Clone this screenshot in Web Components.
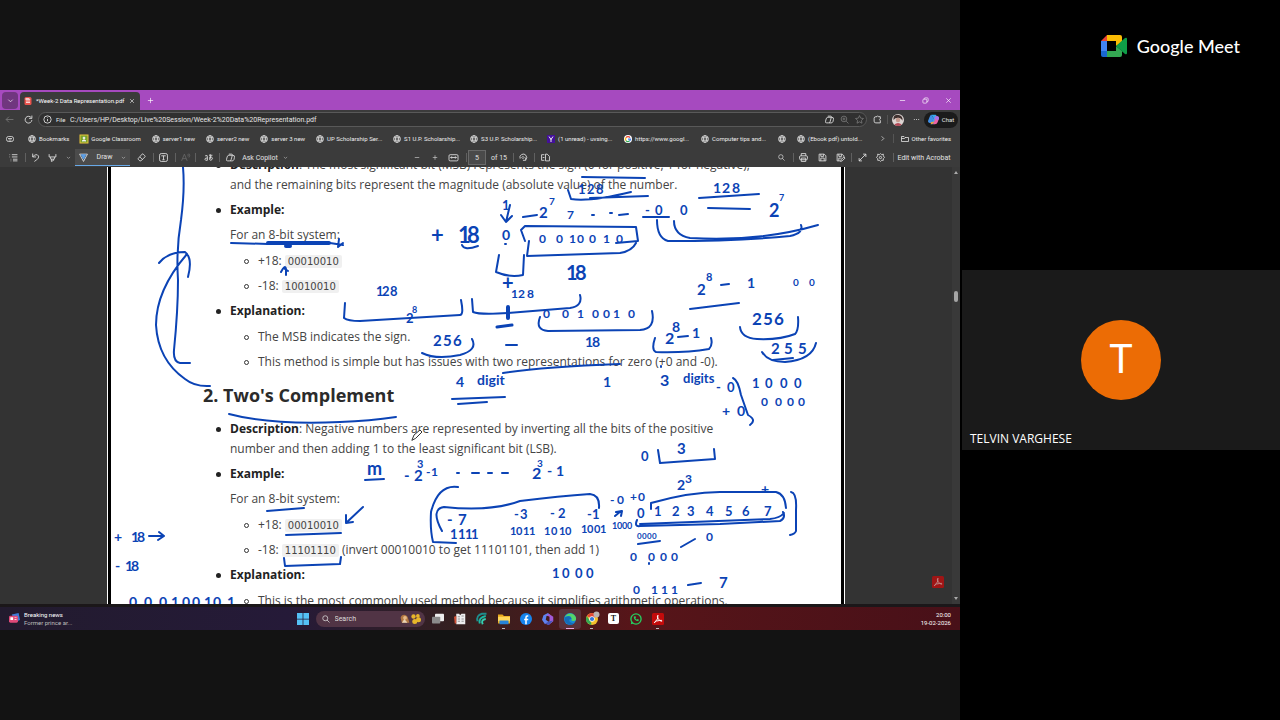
<!DOCTYPE html>
<html lang="en">
<head>
<meta charset="utf-8">
<title>Google Meet - Week-2 Data Representation</title>
<style>
html,body{margin:0;background:#000}
body{font-family:"Open Sans","Noto Sans",sans-serif;color:#fff}
</style>
</head>
<body>
<meet-room></meet-room>
<script>
const define=(name,css,html,setup)=>{
  const t=document.createElement('template');
  t.innerHTML=`<style>*{box-sizing:border-box}button,input,a{font:inherit;color:inherit;text-decoration:none;border:0;background:none;padding:0;margin:0}${css}</style>${html}`;
  customElements.define(name,class extends HTMLElement{
    constructor(){super();this.attachShadow({mode:'open'}).append(t.content.cloneNode(true));}
    connectedCallback(){if(setup)setup(this,this.shadowRoot);}
  });
};

/* Line icons share a 16-unit grid. */
const ICONS={
  down:'<path d="M3 6l5 5 5-5"/>',
  next:'<path d="M6 3l5 5-5 5"/>',
  close:'<path d="M3 3l10 10M13 3L3 13"/>',
  plus:'<path d="M8 2v12M2 8h12"/>',
  minus:'<path d="M2 8h12"/>',
  restore:'<rect x="2" y="5" width="9" height="9" rx="2"/><path d="M5 5V4q0-2 2-2h5q2 0 2 2v5q0 2-3 2"/>',
  back:'<path d="M15 8H2M7 3L2 8l5 5"/>',
  reload:'<path d="M13 5a6 6 0 1 0 1 4M14 1v5H9"/>',
  info:'<circle cx="8" cy="8" r="6.5"/><path d="M8 7v4M8 4v1"/>',
  globe:'<circle cx="8" cy="8" r="6.8"/><ellipse cx="8" cy="8" rx="3" ry="6.8"/><path d="M1.5 5.6h13M1.5 10.4h13"/>',
  side:'<rect x="1" y="3" width="14" height="10" rx="4"/><path d="M4 7h8M5 10h6"/>',
  folder:'<path d="M1 13V3h5l2 2h7v8zM1 7h6l2-2"/>',
  star:'<path d="M8 1l2.1 4.6 5 .6-3.7 3.4 1 5L8 12.1l-4.4 2.5 1-5L.9 6.2l5-.6z"/>',
  zoom:'<circle cx="7" cy="7" r="5"/><path d="M11 11l4 4M4.500 7h5M7 4.500v5"/>',
  search:'<circle cx="6.500" cy="6.500" r="5"/><path d="M10 10l5 5"/>',
  copilot:'<path d="M5 2h5q2 0 1 3l-2 7q-1 2-3 2H3q-3 0-2-3l1-4q1-3 3-3h7q4 0 3 4l-1 4q-1 2-3 2H7"/>',
  puzzle:'<path d="M5 3h2q1-3 3 0h3v4q-3 1 0 3v4H5q-3 0-3-3V6q0-3 3-3"/>',
  dots:'<path d="M2 8h2M7 8h2M12 8h2" stroke-width="2"/>',
  toc:'<path d="M5 3h10M5 7h10M7 11h8M1 3h1M1 7h1M3 11h1M3 14h1M7 14h8"/>',
  undo:'<path d="M3 1v6h6M3 7q3-5 8-4 4 2 2 6-2 3-7 6"/>',
  marker:'<path d="M2 2v5h12V2M4 7l1 4h6l1-4M6 11v4l4-2v-2"/>',
  draw:'<path d="M1 2l7 13 7-13z"/><path d="M4 3l4 8 4-8z" fill="#5ca0e8" stroke="#5ca0e8"/>',
  eraser:'<path d="M2 10l7-8q1-1 2 0l3 3q1 1 0 2l-7 7H5l-3-3zM5 7l5 5"/>',
  textbox:'<rect x="1" y="1" width="14" height="14" rx="3"/><path d="M4 5h8M8 5v7M6 12h4"/>',
  read:'<path d="M1 14L6 2l5 12M3 10h6M12 2q2 1 0 4M14 1q3 3 0 7"/>',
  translate:'<path d="M2 5q5-2 4 2v6H3q-3-2 0-4h3M9 4h6M11 2v9M10 8q4-2 5 1 0 3-3 4-3-1-2-3 1-3 3-5"/>',
  fit:'<rect x="0" y="3" width="16" height="11" rx="2"/><path d="M3 8h10M5 6L3 8l2 2M11 6l2 2-2 2"/>',
  rotate:'<path d="M2 10a6 6 0 1 1 10 2M12 8v5H7M7 6l2 2-2 2-2-2z"/>',
  pages:'<path d="M6 3H1v10h5M8 2v12h7V6l-4-4zM3 8h3"/>',
  print:'<rect x="1" y="5" width="14" height="7" rx="2"/><path d="M4 5V1h8v4M4 9h8v6H4z"/>',
  save:'<path d="M2 2h9l3 3v9H2zM5 2v4h5V2M5 14V9h6v5"/>',
  saveas:'<path d="M14 7V5l-3-3H2v12h5M5 2v4h5V2M5 14V9h5M8 15l1-3 5-5 2 2-5 5z"/>',
  expand:'<path d="M9 2h5v5M14 2L2 14M2 9v5h5"/>',
  gear:'<circle cx="8" cy="8" r="2"/><path d="M8 1l2 2 3-1 0 3 2 3-2 2v3l-3 0-2 2-2-2-3 0 0-3-2-2 2-3 0-3 3 1z"/>',
  classroom:'<rect width="16" height="16" fill="#78a22c" stroke="#e9c33b" stroke-width="2"/><circle cx="8" cy="6" r="2" fill="#fff"/><path d="M4 12q4-5 8 0z" fill="#fff"/>',
  yahoo:'<rect width="16" height="16" fill="#43109a" stroke="none"/><path d="M4 3l4 6 4-6M8 8v6" stroke-width="2"/>',
  google:'<circle cx="8" cy="8" r="8" fill="#fff" stroke="none"/><g stroke-width="2.500"><path d="M12 5a5 5 0 0 0-8 0" stroke="#e94435"/><path d="M4 5a5 5 0 0 0 0 6" stroke="#f9bd08"/><path d="M4 11a5 5 0 0 0 7 1" stroke="#34a853"/><path d="M11 12q2-2 2-4H8" stroke="#4285f4"/></g>',
  pdf:'<rect x="1" width="14" height="16" rx="3" fill="#e8524c" stroke="none"/><path d="M3 6V2h7l3 4" fill="#f3c9c6" stroke="none"/><path d="M4 11h8M4 8h8" stroke-width="1.500"/>',
  color:'<g stroke="none"><path d="M5 1h6q2 0 1 3L9 13q-1 2-3 2H4l4-9z" fill="#36a9ef"/><path d="M5 1q-2 0-3 4L0 10q0 3 4 3 3-1 4-7z" fill="#3f8fe8"/><path d="M11 3q5 0 5 3l-2 6q-1 3-4 3H6q2 0 3-4z" fill="#ed62a6"/><path d="M8 6l5-3q3 1 3 3l-1 3z" fill="#a673ed"/><path d="M4 12l5-1q-1 4-5 4z" fill="#f1a03e"/></g>',
  face:'<circle cx="8" cy="8" r="8" fill="#ddd5d3" stroke="none"/><path d="M2 8q-1-7 6-7 7 1 6 8-2-4-6-4T2 8" fill="#40312f" stroke="none"/><path d="M3 14q5-4 10 0-5 4-10 0" fill="#b34857" stroke="none"/><circle cx="8" cy="8" r="3" fill="#c59a8e" stroke="none"/>',
  windows:'<g fill="#54c1f6" stroke="none"><path d="M0 0h7.500v7.500H0zM8.500 0H16v7.500H8.500zM0 8.500h7.500V16H0zM8.500 8.500H16V16H8.500z"/></g>',
  news:'<g stroke="none"><path d="M4 2l10-2 2 10-7 3z" fill="#3d7bd8"/><rect x="0" y="4" width="13" height="10" rx="2" fill="#e04a78"/><path d="M2 6h4v4H2zM8 6h3v1H8zM8 9h3v1H8z" fill="#fff"/></g>',
  task:'<g stroke="none"><rect x="4" y="1" width="12" height="10" rx="1" fill="#eee"/><rect x="0" y="5" width="11" height="9" rx="1" fill="#8b8b8b"/></g>',
  paper:'<g stroke="none"><path d="M3 1h4l1 2 2-2h5v14H3z" fill="#eee"/><path d="M0 5l3-1v10H1z" fill="#d15237"/></g><path d="M5 5h3M10 4h3M5 8h3M10 8h3M5 11h3M10 11h3" stroke="#777" stroke-width="1"/>',
  swirl:'<g stroke-width="2.500"><path d="M2 11Q0 3 8 1h6" stroke="#1e8d8c"/><path d="M5 14Q3 6 13 4" stroke="#19b9a5"/><path d="M9 15Q6 9 13 8" stroke="#35d1b1"/></g>',
  files:'<g stroke="none"><path d="M0 2h6l2 2h8v10H0z" fill="#e9a91c"/><path d="M0 5h16v6H0z" fill="#ffd75a"/><path d="M2 10h12v5H2z" fill="#2684d8"/></g>',
  facebook:'<circle cx="8" cy="8" r="8" fill="#1684ed" stroke="none"/><path d="M11 4H9.500Q8 4 8 6v9M5.500 8.500H11" stroke-width="2"/>',
  office:'<g stroke="none"><path d="M8 0L2 3 0 9l4 6 5-3-4-3 1-5 5-1z" fill="#5e83ef"/><path d="M9 1l6 4v6l-6 5-5-2 6-3V5L6 3z" fill="#a25ad9"/><path d="M4 14l6-3 5-1-6 6z" fill="#4258b9"/></g>',
  edge:'<g stroke="none"><circle cx="8" cy="8" r="8" fill="#168bd7"/><path d="M1 6Q4-1 11 1q6 3 5 8-2 3-6 1 1-6-4-6-4 0-5 2" fill="#54d36a"/><path d="M1 6q8-4 9 2-5 0-2 4 4 3 7 0-5 7-11 2Q0 11 1 6" fill="#146bb7"/></g>',
  chrome:'<g stroke="none"><circle cx="8" cy="8" r="8" fill="#f4c12d"/><path d="M8 8L1 4q7-8 14 0z" fill="#e24637"/><path d="M1 4l6 9v3Q-3 13 1 4" fill="#34a853"/><circle cx="8" cy="8" r="3.700" fill="#fff"/><circle cx="8" cy="8" r="2.800" fill="#3478db"/><circle cx="14" cy="2" r="4" fill="#bab4b2"/></g>',
  whatsapp:'<circle cx="8" cy="8" r="6.800" stroke="#25cf60" stroke-width="1.800"/><path d="M1 15l1-4 3 3z" fill="#25cf60" stroke="none"/><path d="M5 5q0 5 6 6l1-2-2-1-1 1-2-2 1-1-1-2z" fill="#25cf60" stroke="none"/>',
  acrobat:'<rect width="16" height="16" rx="2" fill="#c30b0b" stroke="none"/><path d="M3 13q6-5 5-10-2 0 0 4t5 4q1-2-3-1-5 0-7 3" stroke-width="1.300"/>',
  shiba:'<g stroke="none"><path d="M1 6q1-5 6-5 5 1 6 6l2 7H3z" fill="#b27842"/><circle cx="8" cy="6" r="3" fill="#e7bb8a"/><path d="M7 8l5 6H3z" fill="#ead5b7"/></g>',
  flowers:'<g stroke="none" fill="#e7b62a"><circle cx="4" cy="4" r="3.500"/><circle cx="11" cy="3" r="3"/><circle cx="12" cy="9" r="4"/><circle cx="6" cy="12" r="4"/></g>'
};
define('ui-icon',':host{display:inline-block;width:9px;height:9px;flex:none}svg{display:block;width:100%;height:100%;overflow:visible;fill:none;stroke:currentColor;stroke-width:1.5}','<svg viewBox="0 0 16 16" aria-hidden="true"></svg>',
 (h,r)=>r.querySelector('svg').innerHTML=ICONS[h.getAttribute('name')]);

define('meet-room',`:host{display:grid;grid-template-columns:3fr 1fr;min-height:100vh;background:#000}
 main{background:#131313;display:grid;align-items:center;min-width:0}`,
 '<main><shared-screen></shared-screen></main><meet-side></meet-side>');

define('meet-side',`:host{display:grid;grid-template-rows:1fr auto 1fr}
 header{display:flex;justify-content:flex-end;align-items:center;align-self:start;gap:10px;padding:32px 40px 0 0;font:500 18px/28px Lato,sans-serif}
 svg{width:26px;height:22px}`,
 `<header><svg viewBox="0 0 26 22" aria-hidden="true"><path d="M6 0v6H0z" fill="#ea4335"/><path d="M0 6h6v10H0z" fill="#4285f4"/><path d="M0 16h6v6H2q-2 0-2-2z" fill="#1967d2"/><path d="M6 0h13q2 0 2 2v5l-6 4V6H6z" fill="#fbbc04"/><path d="M6 16h9v-5l6 5v4q0 2-2 2H6z" fill="#34a853"/><path d="M15 11l9-8q2-1 2 1v14q0 2-2 1z" fill="#0f9d48"/></svg><span>Google Meet</span></header>
 <participant-tile><span slot="initial">T</span>TELVIN VARGHESE</participant-tile>`);

define('participant-tile',`:host{display:grid;grid-template-rows:1fr auto 1fr;justify-items:center;margin-left:2px;min-height:180px;background:#1a1a1a}
 .a{grid-row:2;display:grid;place-items:center;width:80px;height:80px;border-radius:50%;background:#ec6c05;font:400 40px/48px Roboto,sans-serif}
 .n{grid-row:3;justify-self:start;align-self:end;padding:0 8px 3px;font:400 12px/16px "Open Sans",sans-serif}`,
 '<div class="a"><slot name="initial"></slot></div><div class="n"><slot></slot></div>');

define('shared-screen',`:host{display:flex;flex-direction:column;aspect-ratio:16/9;min-width:0;overflow:hidden;background:#1b1719;font:400 6px/8px Roboto,"Open Sans",sans-serif}
 pdf-view{flex:1;min-height:0}`,
 '<tab-strip></tab-strip><address-row></address-row><bookmark-row></bookmark-row><pdf-tools></pdf-tools><pdf-view></pdf-view><task-bar></task-bar>');

define('tab-strip',`:host{display:flex;align-items:center;height:20px;background:#a64abf;padding-left:2px}
 button{display:grid;place-items:center}
 .m{width:16px;height:17px;border-radius:4px;background:#70367f}
 .t{display:flex;align-items:center;gap:4px;margin-left:2px;padding:0 5px 0 4px;width:120px;height:18px;align-self:end;background:#3b3b3b;border-radius:4px 4px 0 0}
 .t span{flex:1;white-space:nowrap}.p{width:20px}.w{margin-left:auto;display:grid;grid-template-columns:repeat(3,23px)}
 ui-icon{width:7px;height:7px}.t>ui-icon{width:8px;height:8px}`,
 `<button class="m" aria-label="Tab actions"><ui-icon name="down"></ui-icon></button><div class="t"><ui-icon name="pdf"></ui-icon><span>*Week-2 Data Representation.pdf</span><button aria-label="Close tab"><ui-icon name="close" style="width:6px;height:6px"></ui-icon></button></div><button class="p" aria-label="New tab"><ui-icon name="plus"></ui-icon></button>
 <div class="w"><button aria-label="Minimize"><ui-icon name="minus"></ui-icon></button><button aria-label="Restore"><ui-icon name="restore"></ui-icon></button><button aria-label="Close"><ui-icon name="close"></ui-icon></button></div>`);

define('address-row',`:host{display:flex;align-items:center;height:19px;background:#3b3b3b;padding-right:2px;color:#e6e6e6}
 button{display:grid;place-items:center}.n{width:19px}.dim{color:#777}
 .f{flex:1;display:flex;align-items:center;height:15px;border:1px solid #595959;border-radius:8px;background:#303030;padding:0 1px 0 4px;gap:4px}
 label{width:10px}
 input{flex:1;min-width:0;font-size:7px;outline:0}.f button{width:11px}.e{width:20px}.d{width:16px}
 .c{display:flex;align-items:center;justify-content:center;gap:3px;width:34px;height:16px;border-radius:8px;background:#1b1b1b}
 .s{width:1px;height:9px;background:#555}`,
 `<button class="n dim" aria-label="Back"><ui-icon name="back"></ui-icon></button><button class="n" aria-label="Reload"><ui-icon name="reload"></ui-icon></button>
 <div class="f"><ui-icon name="info"></ui-icon><label for="u">File</label><input id="u" value="C:/Users/HP/Desktop/Live%20Session/Week-2%20Data%20Representation.pdf"><button aria-label="Copilot"><ui-icon name="copilot"></ui-icon></button><button class="dim" aria-label="Zoom"><ui-icon name="zoom"></ui-icon></button><button class="dim" aria-label="Favorite"><ui-icon name="star"></ui-icon></button></div>
 <button class="e" aria-label="Extensions"><ui-icon name="puzzle"></ui-icon></button><i class="s"></i><button class="e" aria-label="Profile"><ui-icon name="face" style="width:12px;height:12px"></ui-icon></button><button class="d" aria-label="More"><ui-icon name="dots" style="width:7px;height:7px"></ui-icon></button><button class="c"><ui-icon name="color" style="width:11px;height:11px"></ui-icon>Chat</button>`);

define('bookmark-link',`:host{display:block}a{display:flex;align-items:center;gap:3px;white-space:nowrap}:host([cut]) span{width:55px}:host([bare]) span{display:none}ui-icon{width:8px;height:8px}`,
 '<a href="#"><ui-icon name="globe"></ui-icon><span><slot></slot></span></a>',
 (h,r)=>{if(h.hasAttribute('icon'))r.querySelector('ui-icon').outerHTML=`<ui-icon name="${h.getAttribute('icon')}"></ui-icon>`;});

define('bookmark-row',`:host{display:flex;align-items:center;height:19px;background:#3b3b3b;padding:0 9px 0 6px;color:#eee}
 nav{display:flex;gap:11px;margin-left:14px}.r{margin-left:auto;display:flex;align-items:center;gap:7px}.s{width:1px;height:9px;background:#555}
 button{display:grid}`,
 `<button aria-label="Favorites bar"><ui-icon name="side" style="width:8px;height:8px"></ui-icon></button><nav><bookmark-link>Bookmarks</bookmark-link><bookmark-link icon="classroom">Google Classroom</bookmark-link><bookmark-link>server1 new</bookmark-link><bookmark-link>server2 new</bookmark-link><bookmark-link>server 3 new</bookmark-link><bookmark-link cut>UP Scholarship Ser...</bookmark-link><bookmark-link cut>S1 U.P. Scholarship...</bookmark-link><bookmark-link cut>S3 U.P. Scholarship...</bookmark-link><bookmark-link cut icon="yahoo">(1 unread) - uvsing...</bookmark-link><bookmark-link cut icon="google">https://www.googl...</bookmark-link><bookmark-link cut>Computer tips and...</bookmark-link><bookmark-link bare aria-label="Bookmark"></bookmark-link><bookmark-link cut>(Ebook pdf) untold...</bookmark-link></nav>
 <div class="r"><button aria-label="More bookmarks"><ui-icon name="next" style="width:7px;height:7px"></ui-icon></button><i class="s"></i><bookmark-link icon="folder">Other favorites</bookmark-link></div>`);

define('pdf-tools',`:host{display:grid;grid-template-columns:1fr auto 1fr;align-items:center;height:19px;background:#3b3b3b;color:#e2e2e2;font-size:7px}
 div{display:grid;align-items:center;justify-items:center;white-space:nowrap;height:100%}
 button{display:grid;place-items:center}
 .l{grid-template-columns:18px 6px 14px 20px 13px 55px 22px 2px 18px 6px 14px 6px 20px 2px 20px 40px 10px;padding-left:4px;justify-content:start}
 .c{grid-template-columns:22px 14px 22px 4px 18px 26px 2px 18px 4px 18px}
 .r{grid-template-columns:21px 2px 19px 18px 18px 4px 18px 18px 8px 54px;justify-content:end;padding-right:9px}
 i{width:1px;height:9px;background:#606060}.dim{color:#666}
 .draw{display:flex;justify-content:space-around;align-items:center;width:55px;height:17px;background:#4b4b4b;border-bottom:1px solid #68a9e8}
 .k{width:5px;height:5px}input{width:18px;height:15px;background:#4a4a4a;border:1px solid #696969;text-align:center}`,
 `<div class="l"><button aria-label="Contents"><ui-icon name="toc"></ui-icon></button><i></i><button aria-label="Undo"><ui-icon name="undo"></ui-icon></button><button aria-label="Highlight"><ui-icon name="marker"></ui-icon></button><ui-icon class="k" name="down"></ui-icon><button class="draw"><ui-icon name="draw"></ui-icon>Draw<ui-icon class="k" name="down"></ui-icon></button><button aria-label="Erase"><ui-icon name="eraser"></ui-icon></button><i></i><button aria-label="Add text"><ui-icon name="textbox"></ui-icon></button><i></i><button class="dim" aria-label="Read aloud"><ui-icon name="read"></ui-icon></button><i></i><button aria-label="Translate"><ui-icon name="translate"></ui-icon></button><i></i><ui-icon name="copilot"></ui-icon><button>Ask Copilot</button><ui-icon class="k" name="down"></ui-icon></div>
 <div class="c"><button aria-label="Zoom out"><ui-icon name="minus" style="width:6px"></ui-icon></button><button aria-label="Zoom in"><ui-icon name="plus" style="width:6px"></ui-icon></button><button aria-label="Fit"><ui-icon name="fit"></ui-icon></button><i></i><input aria-label="Page" value="5"><span>of 15</span><i></i><button aria-label="Rotate"><ui-icon name="rotate"></ui-icon></button><i></i><button aria-label="Page view"><ui-icon name="pages"></ui-icon></button></div>
 <div class="r"><button aria-label="Find"><ui-icon name="search" style="width:7px"></ui-icon></button><i></i><button aria-label="Print"><ui-icon name="print"></ui-icon></button><button aria-label="Save"><ui-icon name="save"></ui-icon></button><button aria-label="Save as"><ui-icon name="saveas"></ui-icon></button><i></i><button aria-label="Full screen"><ui-icon name="expand"></ui-icon></button><button aria-label="Settings"><ui-icon name="gear"></ui-icon></button><i></i><button>Edit with Acrobat</button></div>`);

define('pdf-view',`:host{display:grid;grid-template-columns:1fr 8px;background:#333;overflow:hidden}
 .v{display:flex;justify-content:center;overflow:hidden;min-height:0;position:relative}
 .sheet{width:738px;flex:none;border:solid #fff;border-width:0 1px;background:#000;padding:0 3px;overflow:hidden}
 .paper{position:relative;background:#fff;overflow:hidden;height:100%}
 ink-layer{position:absolute;inset:0}
 .a{position:absolute;right:8px;bottom:16px;display:grid;width:12px;height:12px;color:#eba3a3}
 .a ui-icon{width:12px;height:12px;opacity:.75}
 .b{display:flex;flex-direction:column;align-items:center;background:#393939;padding:4px 0}
 .b i{width:4px;height:11px;border-radius:2px;background:#a5a5a5}
 .u,.d{border:solid transparent;border-width:0 2px;width:0;height:0}.u{border-bottom:3px solid #aaa}.d{border-top:3px solid #aaa}`,
 `<div class="v"><div class="sheet"><div class="paper"><lecture-notes></lecture-notes><ink-layer></ink-layer></div></div><button class="a" aria-label="Open in Acrobat"><ui-icon name="acrobat"></ui-icon></button></div><div class="b"><span class="u"></span><span style="flex:116"></span><i></i><span style="flex:294"></span><span class="d"></span></div>`);

define('lecture-notes',`:host{display:block;margin-top:-12px;padding-left:92px;color:#444;font:400 12px/20px "Open Sans",sans-serif;white-space:nowrap}
 ul{list-style:none;margin:0;padding:0 0 0 27px}ul ul{margin-top:6px;padding-left:28px}li{margin-bottom:5px;position:relative}
 p{margin:0}p+p{margin-top:5px}
 b{color:#222;font-weight:700}
 li::before{content:"";box-sizing:border-box;position:absolute;left:-14px;top:8px;width:5px;height:5px;border-radius:50%;background:#222}
 li li::before{background:none;border:1px solid #333}
 h2{margin:10px 0 11px;font:700 18px/26px "Open Sans",sans-serif;color:#2b2b2b}
 code{font:10px/14px "DejaVu Sans",sans-serif;background:#f0f0f0;padding:1px 3px;border-radius:2px}`,
 `<ul><li><b>Description</b>: The most significant bit (MSB) represents the sign (0 for positive, 1 for negative),<br>and the remaining bits represent the magnitude (absolute value) of the number.</li>
 <li><p><b>Example:</b></p><p>For an 8-bit system:</p><ul><li>+18: <code>00010010</code></li><li>-18: <code>10010010</code></li></ul></li>
 <li><b>Explanation:</b><ul><li>The MSB indicates the sign.</li><li>This method is simple but has issues with two representations for zero (+0 and -0).</li></ul></li></ul>
 <h2>2. Two's Complement</h2>
 <ul><li><b>Description</b>: Negative numbers are represented by inverting all the bits of the positive<br>number and then adding 1 to the least significant bit (LSB).</li>
 <li><p><b>Example:</b></p><p>For an 8-bit system:</p><ul><li>+18: <code>00010010</code></li><li>-18: <code>11101110</code> (invert 00010010 to get 11101101, then add 1)</li></ul></li>
 <li><b>Explanation:</b><ul><li>This is the most commonly used method because it simplifies arithmetic operations.</li></ul></li></ul>`);

/* Pen notes on the sheet: [x positions, baseline, size, text]. */
const NOTES=[
 ['578 587 596',194,13,'128'],['502',210,13,'1'],['539',218,15,'2'],['549',205,10,'7'],['567',219,12,'7'],['645 655',215,13,'-0'],['680',215,13,'0'],
 ['713 722 732',193,14,'128'],['769',217,18,'2'],['779',201,9,'7'],['431 458 467',243,22,'+18'],['502',240,14,'0'],
 ['539 556 569 577 589 603 616',243,12,'0010010'],['566 575',280,20,'18'],['502',290,20,'+'],['511 518 527',298,12,'128'],
 ['376 382 390',296,13,'128'],['406',323,13,'2'],['412',313,9,'8'],['543 562 577 592 603 613 628',318,12,'0010010'],['585 592',347,14,'18'],
 ['433 443 453',346,15,'256'],['665',344,16,'2'],['672',332,14,'8'],['692',338,14,'1'],['697',295,15,'2'],['706',281,11,'8'],['747',288,14,'1'],['793 809',286,10,'00'],
 ['752 763 774',325,17,'256'],['771 784 798',354,15,'255'],['456',387,14,'4'],['477',385,14,'digit'],['603',387,14,'1'],['660',386,16,'3'],['683',383,13,'digits'],
 ['716 727',392,13,'-0'],['722 737',416,14,'+0'],['752 765 780 794',388,13,'1000'],['761 775 787 798',406,12,'0000'],
 ['367',475,18,'m'],['404 414',481,15,'-2'],['417',468,11,'3'],['426 431',476,12,'-1'],['532',479,16,'2'],['537',467,10,'3'],['547 556',476,14,'-1'],
 ['641',461,13,'0'],['677',454,15,'3'],['677',490,14,'2'],['685',483,12,'3'],['447 458',525,15,'-7'],['514 520',519,13,'-3'],['550 558',518,13,'-2'],['587 592',519,13,'-1'],
 ['450 458 465 471',539,13,'1111'],['510 516 523 529',535,11,'1011'],['544 551 559 565',535,11,'1010'],['581 587 594 600',533,11,'1001'],['612 617 622 627',529,9,'1000'],
 ['610 617',504,12,'-0'],['630 638',501,12,'+0'],['637',518,13,'0'],['654 672 687 706 725 742 764',516,13,'1234567'],['761',494,14,'+'],
 ['637 642 647 652',539,8,'0000'],['706',541,12,'0'],['630 648 660 671',561,12,'0000'],['633 651 661 671',594,12,'0111'],['719',588,15,'7'],['552 562 575 586',578,13,'1000'],
 ['114 131 137',542,14,'+18'],['115 125 131',571,14,'-18'],['129 144 159 171 182 192 204 213 227',607,14,'000100101']
];
const STROKES=`M510 205L506 222M501 215L506 222L512 216M523 217L537 215M592 215h2M610 213h2M619 215L628 214M643 217H669M699 198L759 194M708 208L750 209M582 177L645 178M568 190L571 199Q590 202 631 192M590 198L648 196M462 245Q464 251 478 246M505 244h1M525 241L521 230L525 226L636 227L638 241L616 243M529 241L527 256L620 253Q632 251 636 243M499 255L496 272Q510 278 523 275L524 255M345 303L344 318Q348 321 360 321L460 315Q464 315 461 300M472 299L473 312Q480 315 508 313L570 308Q583 306 580 295M506 345H517M540 317Q535 330 548 331L640 330Q656 329 652 311M422 353Q436 360 460 355Q478 350 472 339M678 337L688 336M655 338Q651 350 656 352Q685 353 709 349Q713 345 711 338M721 285L729 284M690 309L739 303M740 327Q741 338 757 339Q780 340 795 334Q799 330 798 317M762 352Q768 362 785 362Q812 360 816 343M773 360L793 358M452 399L505 397M458 404L487 402M503 373Q540 367 620 364M661 366v1M733 378Q738 380 741 395L748 415Q757 420 750 425M657 220Q657 238 668 241Q740 241 790 236Q804 233 801 225M674 221Q674 235 690 238Q760 242 818 225M183 167Q185 190 181 220Q176 250 178 280Q178 310 174 350Q173 362 180 363L190 363M159 263Q168 252 185 252Q193 258 188 277M187 254Q156 290 156 325Q158 360 185 379Q195 387 210 386M231 243L268 244M330 243L343 245M339 239L338 247L343 243M281 272Q285 264 286 269L286 275M285 269L288 271M229 414Q270 425 340 422Q370 421 396 417M365 480L384 479M457 473h2M472 473h7M488 473h4M502 473h6M658 450L660 463L715 459L714 449M458 487Q438 484 431 512Q430 530 433 542L456 543M442 531Q430 509 444 507Q490 512 520 501Q560 496 590 494Q600 495 599 508M615 516L621 511M616 512L622 511L621 516M651 509V503Q690 492 720 492H776Q785 494 786 508M637 520Q634 527 640 526L720 524L780 521Q786 518 783 512M640 524L770 519Q780 518 784 513M791 492Q797 493 796 510V531Q795 534 790 535M638 544L660 541M681 547L695 539M649 563v1M688 585L701 583M149 536H164M159 532L164 536L158 540M363 507L346 523M346 515V523L353 522M286 535L341 533M267 511L304 508M284 558L285 566L340 564L341 557`;
define('ink-layer',`:host{display:block;overflow:hidden}svg{display:block;width:730px;height:437px;overflow:visible}
 path{fill:none;stroke:#0b43b5;stroke-width:2;stroke-linecap:round;stroke-linejoin:round}.w{stroke-width:4}.cursor{fill:#fff;stroke:#333;stroke-width:1}
 text{fill:#0b43b5;font-family:Lato,"Open Sans",sans-serif;font-weight:700}`,
 `<svg viewBox="111 167 730 437"><path d="${STROKES}"/><path class="w" d="M268 243H329M286 246h4M508 307V318"/><path d="M497 327L512 325" style="stroke-width:3"/><path class="cursor" d="M412 440l2-5 6-5 2 2-6 6z"/>${NOTES.map(n=>`<text x="${n[0]}" y="${n[1]}" font-size="${n[2]}">${n[3]}</text>`).join('')}</svg>`);

define('task-bar',`:host{display:grid;grid-template-columns:1fr auto 1fr;align-items:center;height:23px;margin-top:3px;background:linear-gradient(90deg,#221b2e,#251a38 30%,#35201f 48%,#571519 66%,#481018)}
 .n{display:flex;align-items:center;gap:4px;padding-left:9px;text-align:left}.n small{display:block;font-size:6px;color:#bbb}
 .m{display:flex;align-items:center}
 .m button{width:22px;height:20px;display:grid;place-items:center;border-radius:3px;position:relative}
 .m ui-icon{width:12px;height:12px}
 .s{display:flex;align-items:center;gap:5px;width:109px;height:16px;margin:0 2px;border-radius:8px;background:#513445;padding:0 4px 0 6px;color:#ddd}
 .s input{flex:1;min-width:0;font-size:7px;outline:0}.s input::placeholder{color:#ddd}.s ui-icon{width:8px;height:8px}.s .p{width:10px;height:12px;margin-left:-4px}
 .on{background:#5a323b}.run::after{content:"";position:absolute;bottom:0;width:3px;height:1px;background:#bbb}.on::after{width:8px;background:#e8a8e0}
 .t{display:grid;place-items:center;width:11px;height:11px;background:#fff;color:#222;border-radius:2px;font:700 8px/10px "Liberation Serif",serif}
 time{justify-self:end;text-align:right;padding-right:9px}`,
 `<button class="n"><ui-icon name="news" style="width:11px;height:11px"></ui-icon><span>Breaking news<small>Former prince ar...</small></span></button>
 <div class="m"><button aria-label="Start"><ui-icon name="windows"></ui-icon></button><div class="s"><ui-icon name="search"></ui-icon><input aria-label="Search" placeholder="Search"><ui-icon class="p" name="shiba"></ui-icon><ui-icon class="p" name="flowers"></ui-icon></div>
 <button aria-label="Task view"><ui-icon name="task"></ui-icon></button><button aria-label="News"><ui-icon name="paper"></ui-icon></button><button aria-label="Assistant"><ui-icon name="swirl"></ui-icon></button><button class="run" aria-label="Files"><ui-icon name="files"></ui-icon></button><button aria-label="Facebook"><ui-icon name="facebook"></ui-icon></button><button aria-label="Office"><ui-icon name="office"></ui-icon></button><button class="run on" aria-label="Edge"><ui-icon name="edge"></ui-icon></button><button class="run" aria-label="Chrome"><ui-icon name="chrome"></ui-icon></button><button aria-label="Typora"><span class="t">T</span></button><button aria-label="WhatsApp"><ui-icon name="whatsapp"></ui-icon></button><button class="run" aria-label="Acrobat"><ui-icon name="acrobat"></ui-icon></button></div>
 <time datetime="2026-02-19T20:00">20:00<br>19-02-2026</time>`);
</script>
</body>
</html>
